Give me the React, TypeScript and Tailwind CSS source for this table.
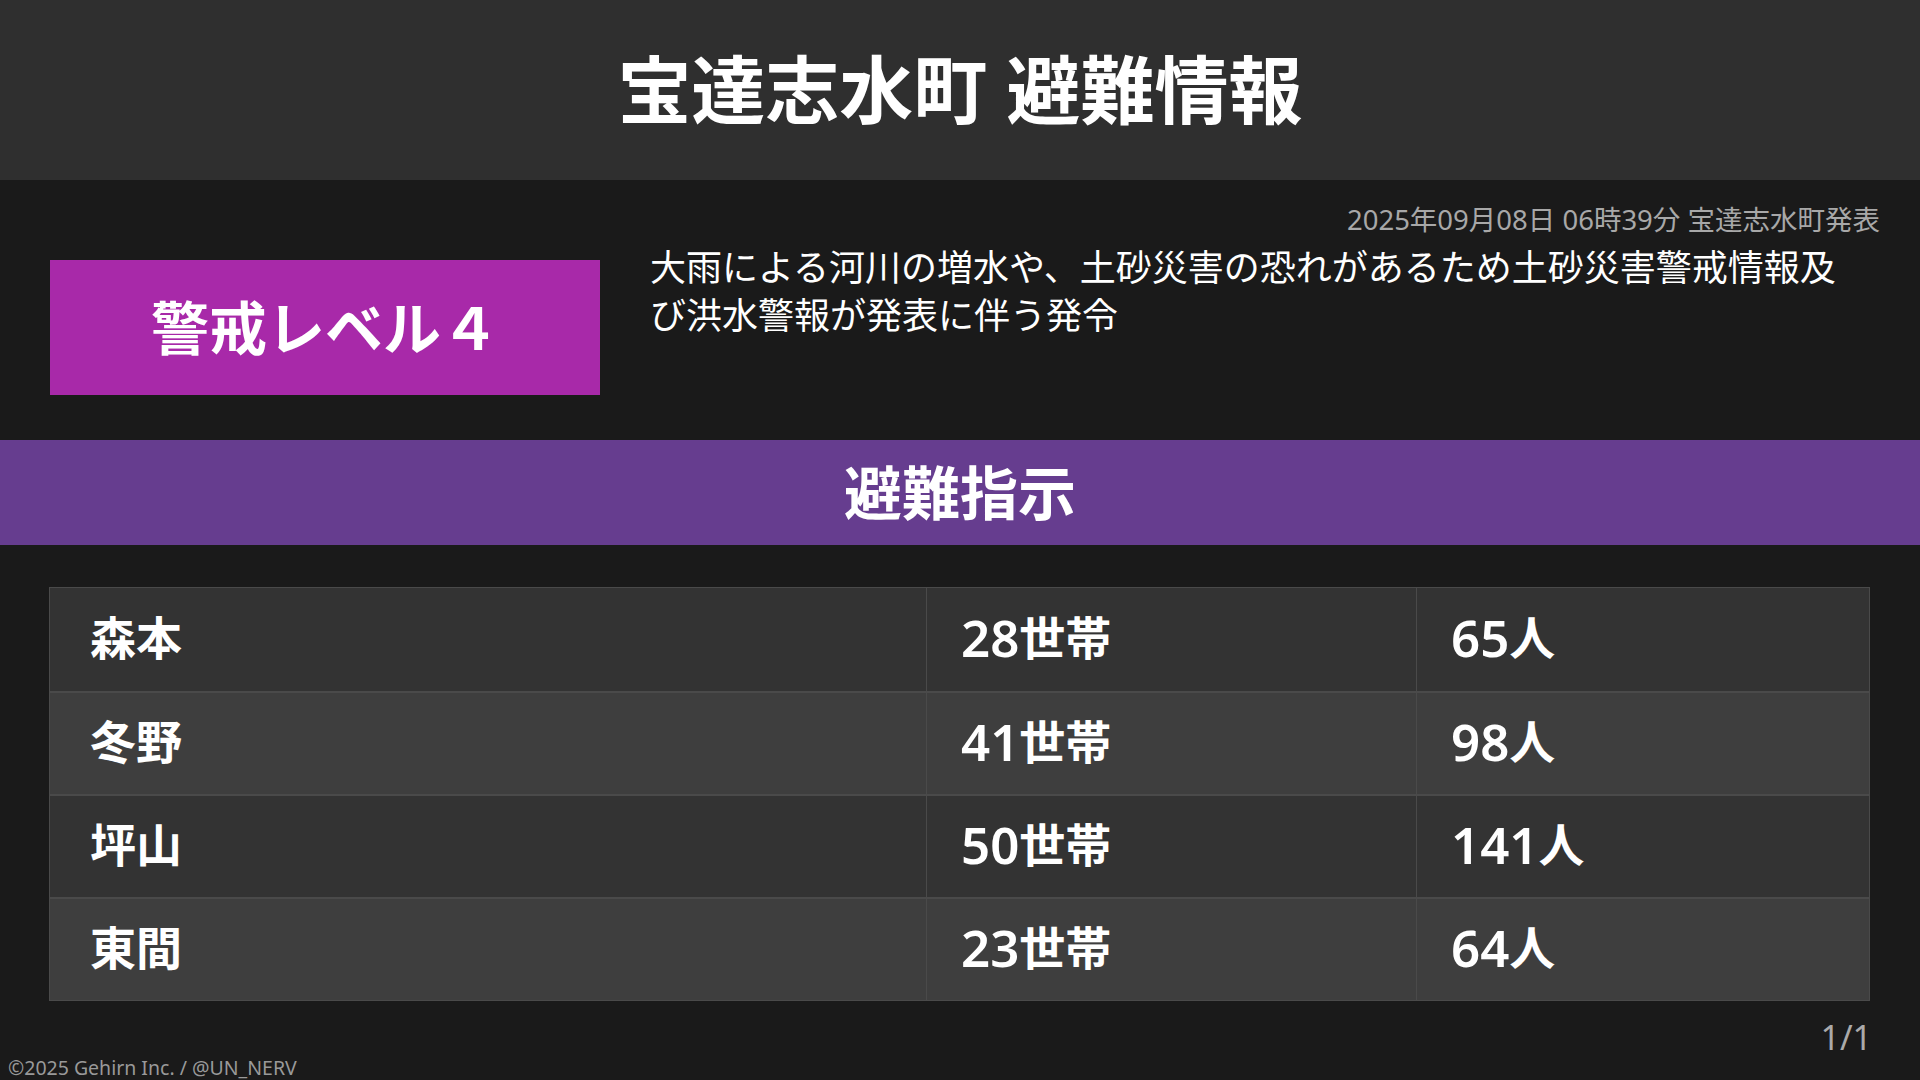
const rows = [
  { area: "森本", count: "28", unit: "世帯", people: "65", punit: "人" },
  { area: "冬野", count: "41", unit: "世帯", people: "98", punit: "人" },
  { area: "坪山", count: "50", unit: "世帯", people: "141", punit: "人" },
  { area: "東間", count: "23", unit: "世帯", people: "64", punit: "人" },
];

export default function App() {
  return (
    <div className="w-[1920px] h-[1080px] bg-[#1a1a1a] text-white flex flex-col overflow-hidden font-['Noto_Sans','Noto_Sans_CJK_JP',sans-serif]">
      {/* header */}
      <header className="h-[180px] shrink-0 bg-[#2f2f2f] flex items-center justify-center">
        <h1 className="text-[74px] font-bold leading-none">宝達志水町 避難情報</h1>
      </header>

      {/* level + description */}
      <section className="h-[260px] shrink-0 pl-[50px] pr-[40px] pt-[20px]">
        <p className="text-right text-[27.5px] leading-[40px] text-[#a8a8a8]">
          2025年09月08日 06時39分 宝達志水町発表
        </p>
        <div className="flex items-start gap-[50px]">
          <div className="w-[550px] h-[135px] mt-[20px] shrink-0 bg-[#a829a9] flex items-center justify-center">
            <span className="text-[58px] font-bold leading-none">警戒レベル４</span>
          </div>
          <p className="max-w-[1200px] pt-[4px] text-[36px] leading-[48px]">
            大雨による河川の増水や、土砂災害の恐れがあるため土砂災害警戒情報及び洪水警報が発表に伴う発令
          </p>
        </div>
      </section>

      {/* category bar */}
      <div className="h-[105px] shrink-0 bg-[#663d8f] flex items-center justify-center">
        <h2 className="text-[58px] font-bold leading-none">避難指示</h2>
      </div>

      {/* table */}
      <div className="mt-[42px] ml-[49px] w-[1821px] border border-[#4a4a4a]">
        {rows.map((r, i) => (
          <div
            key={r.area}
            className={
              "flex h-[103px] " +
              (i % 2 === 0 ? "bg-[#333333]" : "bg-[#3e3e3e]") +
              (i > 0 ? " border-t-2 border-[#4a4a4a]" : "")
            }
          >
            <div className="w-[877px] pl-[40px] pb-[5px] flex items-center text-[46px] font-bold border-r border-[#4a4a4a]">
              {r.area}
            </div>
            <div className="w-[490px] pl-[34px] pb-[5px] flex items-center text-[46px] font-bold border-r border-[#4a4a4a]">
              <span className="text-[51px] font-semibold">{r.count}</span>
              {r.unit}
            </div>
            <div className="flex-1 pl-[34px] pb-[5px] flex items-center text-[46px] font-bold">
              <span className="text-[51px] font-semibold">{r.people}</span>
              {r.punit}
            </div>
          </div>
        ))}
      </div>

      {/* footer */}
      <div className="mt-[18px] pr-[48px] text-right text-[34px] leading-[36px] text-[#aaaaaa]">1/1</div>
      <div className="pl-[8px] mt-[2px] text-[19.5px] leading-[22px] text-[#999999]">©2025 Gehirn Inc. / @UN_NERV</div>
    </div>
  );
}
